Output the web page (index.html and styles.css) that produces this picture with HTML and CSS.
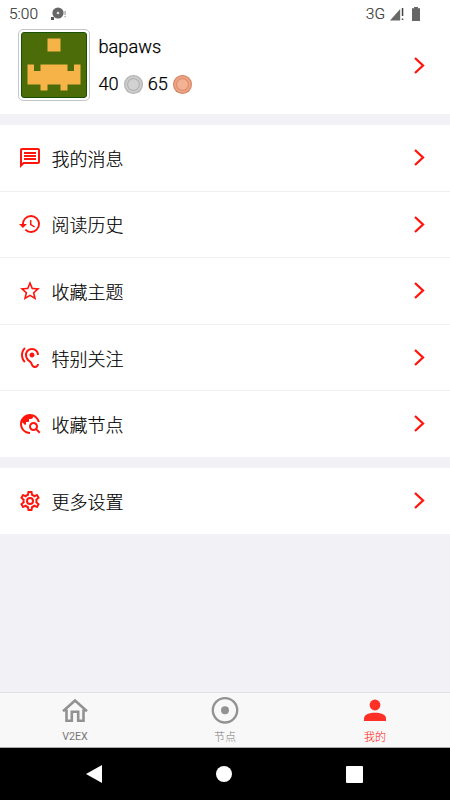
FILE: index.html
```html
<!DOCTYPE html>
<html lang="zh-CN">
<head>
<meta charset="utf-8">
<title>V2EX</title>
<link rel="stylesheet" href="styles.css">
</head>
<body>
<div class="screen">
  <header class="status">
    <span class="time">5:00</span>
    <svg class="notice" width="16" height="14" viewBox="0 0 16 14"><circle cx="7" cy="6" r="5.600" fill="#666"/><path d="M0 10h3v3H0z" fill="#555"/><circle cx="7" cy="6" r="1.300" fill="#ddd"/><path d="M13.400 4h1.400v4h-1.400zm0 5h1.400v1.300h-1.400z" fill="#aaa"/></svg>
    <span class="network">3G</span>
    <svg class="signal" width="14" height="14" viewBox="0 0 14 14"><path d="M0 13.500L10.200 2v11.500z" fill="#686868"/><path d="M11.800 1h1.500v8h-1.500zm0 10.500h1.500V13h-1.500z" fill="#444"/></svg>
    <svg class="battery" width="8" height="14" viewBox="0 0 8 14"><path d="M2 0h4v1.300h2V14H0V1.300h2z" fill="#666"/></svg>
  </header>
  <section class="profile">
    <div class="avatar">
      <svg width="66" height="66" viewBox="0 0 66 66"><rect x=".5" y=".5" width="65" height="65" rx="2.500" fill="#4b6c08" stroke="#185008"/><path fill="#f6b347" d="M26.500 6.500h13v13h-13zM6.500 32.500H13V39h6.500v-6.500h27V39H53v-6.500h6.500v20H46.500v6H39.500v-6h-13v6h-7v-6h-13z"/></svg>
    </div>
    <div class="info">
      <div class="name">bapaws</div>
      <div class="balance"><span>40</span><i class="coin silver"></i><span>65</span><i class="coin bronze"></i></div>
    </div>
    <svg class="chevron" width="12" height="18" viewBox="0 0 12 18"><path d="M2 2L10 9.500l-8 7.500"/></svg>
  </section>
  <nav class="group">
    <a class="row"><svg class="icon" viewBox="0 0 24 24"><path d="M4 4h16v12H5.170L4 17.170V4m0-2c-1.100 0-1.990.9-1.990 2L2 22l4-4h14c1.100 0 2-.9 2-2V4c0-1.100-.9-2-2-2H4zm2 10h12v2H6v-2zm0-3h12v2H6V9zm0-3h12v2H6V6z"/></svg><span>我的消息</span><svg class="chevron" width="12" height="18" viewBox="0 0 12 18"><path d="M2 2L10 9.500l-8 7.500"/></svg></a>
    <a class="row"><svg class="icon" viewBox="0 0 24 24"><path d="M13 3a9 9 0 0 0-9 9H1l3.890 3.890.07.14L9 12H6c0-3.870 3.130-7 7-7s7 3.130 7 7-3.130 7-7 7c-1.930 0-3.680-.79-4.940-2.060l-1.420 1.420A8.954 8.954 0 0 0 13 21a9 9 0 0 0 0-18zm-1 5v5l4.250 2.520.77-1.280-3.520-2.090V8z"/></svg><span>阅读历史</span><svg class="chevron" width="12" height="18" viewBox="0 0 12 18"><path d="M2 2L10 9.500l-8 7.500"/></svg></a>
    <a class="row"><svg class="icon" viewBox="0 0 24 24"><path d="M12 15.390L8.240 17.660L9.230 13.380L5.910 10.500L10.290 10.130L12 6.090L13.710 10.130L18.090 10.500L14.770 13.380L15.760 17.660M22 9.240L14.810 8.630L12 2L9.190 8.630L2 9.240L7.450 13.970L5.820 21L12 17.270L18.180 21L16.540 13.970L22 9.240Z"/></svg><span>收藏主题</span><svg class="chevron" width="12" height="18" viewBox="0 0 12 18"><path d="M2 2L10 9.500l-8 7.500"/></svg></a>
    <a class="row"><svg class="icon" viewBox="0 0 24 24"><path d="M17 20c-.29 0-.56-.06-.76-.15-.71-.37-1.210-.88-1.710-2.380-.51-1.560-1.470-2.290-2.390-3-.79-.61-1.610-1.240-2.320-2.530C9.290 10.980 9 9.930 9 9c0-2.800 2.200-5 5-5s5 2.200 5 5h2c0-3.930-3.070-7-7-7S7 5.070 7 9c0 1.260.38 2.650 1.070 3.900.91 1.650 1.980 2.480 2.850 3.150.81.62 1.390 1.070 1.710 2.050.6 1.820 1.370 2.840 2.730 3.550.51.23 1.070.35 1.640.35 2.210 0 4-1.790 4-4h-2c0 1.100-.9 2-2 2zM7.640 2.640L6.220 1.220C4.230 3.210 3 5.960 3 9s1.230 5.790 3.220 7.780l1.410-1.410C6.010 13.740 5 11.490 5 9s1.010-4.740 2.640-6.360zM11.500 9c0 1.380 1.120 2.500 2.500 2.500s2.500-1.120 2.500-2.500-1.120-2.500-2.500-2.500-2.500 1.120-2.500 2.500z"/></svg><span>特别关注</span><svg class="chevron" width="12" height="18" viewBox="0 0 12 18"><path d="M2 2L10 9.500l-8 7.500"/></svg></a>
    <a class="row"><svg class="icon" viewBox="0 0 24 24"><path d="M19.300 16.900c.4-.7.7-1.500.7-2.400 0-2.500-2-4.500-4.500-4.500S11 12 11 14.500s2 4.500 4.500 4.500c.9 0 1.700-.3 2.400-.7l3.200 3.200 1.400-1.400-3.200-3.200zm-3.800.1c-1.400 0-2.500-1.100-2.500-2.500s1.100-2.500 2.500-2.500 2.500 1.100 2.500 2.500-1.100 2.500-2.500 2.500zM12 20v2C6.480 22 2 17.520 2 12S6.480 2 12 2c4.840 0 8.870 3.440 9.800 8h-2.070c-.64-2.460-2.400-4.470-4.730-5.410V5c0 1.100-.9 2-2 2h-2v2c0 .55-.45 1-1 1H8v2l-.8 1.200-2.990-2.990C4.080 10.790 4 11.380 4 12c0 4.410 3.590 8 8 8z"/></svg><span>收藏节点</span><svg class="chevron" width="12" height="18" viewBox="0 0 12 18"><path d="M2 2L10 9.500l-8 7.500"/></svg></a>
  </nav>
  <nav class="group">
    <a class="row"><svg class="icon" viewBox="0 0 24 24"><path d="M12,8A4,4 0 0,1 16,12A4,4 0 0,1 12,16A4,4 0 0,1 8,12A4,4 0 0,1 12,8M12,10A2,2 0 0,0 10,12A2,2 0 0,0 12,14A2,2 0 0,0 14,12A2,2 0 0,0 12,10M10,22C9.750,22 9.540,21.820 9.500,21.580L9.130,18.930C8.500,18.680 7.960,18.340 7.440,17.940L4.950,18.950C4.730,19.030 4.460,18.950 4.340,18.730L2.340,15.270C2.210,15.050 2.270,14.780 2.460,14.630L4.570,12.970L4.500,12L4.570,11L2.460,9.370C2.270,9.220 2.210,8.950 2.340,8.730L4.340,5.270C4.460,5.050 4.730,4.960 4.950,5.050L7.440,6.050C7.960,5.660 8.500,5.320 9.130,5.070L9.500,2.420C9.540,2.180 9.750,2 10,2H14C14.250,2 14.460,2.180 14.500,2.420L14.870,5.070C15.500,5.320 16.040,5.660 16.560,6.050L19.050,5.050C19.270,4.960 19.540,5.050 19.660,5.270L21.660,8.730C21.790,8.950 21.730,9.220 21.540,9.370L19.430,11L19.500,12L19.430,13L21.540,14.630C21.730,14.780 21.790,15.050 21.660,15.270L19.660,18.730C19.540,18.950 19.270,19.040 19.050,18.950L16.560,17.950C16.040,18.340 15.500,18.680 14.870,18.930L14.500,21.580C14.460,21.820 14.250,22 14,22H10M11.250,4L10.880,6.610C9.680,6.860 8.620,7.500 7.850,8.390L5.440,7.350L4.690,8.650L6.800,10.200C6.400,11.370 6.400,12.640 6.800,13.800L4.680,15.360L5.430,16.660L7.860,15.620C8.630,16.500 9.680,17.140 10.870,17.380L11.240,20H12.760L13.130,17.390C14.320,17.140 15.370,16.500 16.140,15.620L18.570,16.660L19.320,15.360L17.200,13.810C17.600,12.640 17.600,11.370 17.200,10.200L19.310,8.650L18.560,7.350L16.150,8.390C15.380,7.500 14.320,6.860 13.120,6.620L12.750,4H11.250Z"/></svg><span>更多设置</span><svg class="chevron" width="12" height="18" viewBox="0 0 12 18"><path d="M2 2L10 9.500l-8 7.500"/></svg></a>
  </nav>
  <footer class="tabs">
    <a class="tab"><svg width="32" height="32" viewBox="0 0 32 32"><path d="M7.500 15.500V26.800h5.300v-9h6.400v9h5.300V15.500M4 17.300L16 6.500l12 10.800" fill="none" stroke="#929292" stroke-width="2.600"/></svg><span class="latin">V2EX</span></a>
    <a class="tab"><svg width="32" height="32" viewBox="0 0 32 32"><circle cx="16" cy="16.300" r="12.200" fill="none" stroke="#929292" stroke-width="2.300"/><circle cx="16" cy="16.300" r="4" fill="#929292"/></svg><span>节点</span></a>
    <a class="tab active"><svg width="32" height="32" viewBox="0 0 32 32"><circle cx="16" cy="11" r="5.400"/><path d="M5 27v-2.500c0-4 5.500-5.700 11-5.700s11 1.700 11 5.700V27z"/></svg><span>我的</span></a>
  </footer>
  <div class="system">
    <svg width="16" height="18" viewBox="0 0 16 18"><path d="M0 9L16 0v18z"/></svg>
    <svg width="16" height="16" viewBox="0 0 16 16"><circle cx="8" cy="8" r="8"/></svg>
    <svg width="17" height="17" viewBox="0 0 17 17"><rect width="17" height="17" rx="1"/></svg>
  </div>
</div>
</body>
</html>
```
FILE: styles.css
```css
* { box-sizing: border-box; }
body {
  margin: 0;
  font-family: Roboto, "Noto Sans CJK SC", sans-serif;
  color: #000;
}
svg { display: block; flex: none; }
.screen {
  width: 450px;
  height: 800px;
  display: flex;
  flex-direction: column;
  background: #f2f1f6;
  overflow: hidden;
}
.status {
  height: 28px;
  flex: none;
  display: flex;
  align-items: center;
  padding: 0 30px 0 9px;
  background: #fff;
  color: #333;
  font-size: 15.5px;
  font-weight: 300;
  -webkit-text-stroke: .15px #333;
}
.time { width: 42px; }
.network { margin-left: auto; margin-right: 5px; font-size: 15.5px; }
.battery { margin-left: 8px; }
.profile {
  height: 86px;
  flex: none;
  display: flex;
  align-items: flex-start;
  padding: 1.4px 25px 0 17.5px;
  background: #fff;
}
.avatar {
  width: 72px;
  height: 72px;
  padding: 2px;
  border: 1px solid #c5c5cb;
  border-radius: 5px;
}
.info {
  margin-left: 9px;
  padding-top: 6px;
  font-size: 18.2px;
  font-weight: 300;
  line-height: 24px;
  -webkit-text-stroke: .25px #000;
}
.balance {
  display: flex;
  align-items: center;
  gap: 5px;
  margin-top: 13px;
}
.coin {
  width: 19px;
  height: 19px;
  border-radius: 50%;
}
.silver { background: radial-gradient(circle closest-side, #d2d2d2 0 50%, #b0b0b0 62%, #cecece 72% 80%, #a5a5a5 100%); }
.bronze { background: radial-gradient(circle closest-side, #f3b294 0 50%, #dc8c6b 62%, #eda585 72% 80%, #cc7550 100%); }
.chevron {
  margin-left: auto;
  fill: none;
  stroke: #ff150c;
  stroke-width: 2.3;
}
.profile .chevron { margin-top: 26.5px; }
.group {
  margin-top: 11px;
  flex: none;
  background: #fff;
}
.row {
  height: 66.6px;
  display: flex;
  align-items: center;
  padding: 0 25px 1px 18px;
  font-size: 18px;
  font-weight: 300;
  border-bottom: 1px solid #f0f0f3;
}
.row span {
  margin-left: 9.5px;
  padding-top: 1px;
  -webkit-text-stroke: .15px #000;
}
.row:last-child { border-bottom-color: transparent; height: 66px; }
.icon { width: 24px; height: 24px; margin-top: 1px; fill: #ff150c; }
.tabs {
  height: 56px;
  margin-top: auto;
  flex: none;
  display: grid;
  grid-template-columns: repeat(3, 1fr);
  background: #f8f8f8;
  border-top: 1px solid #e2e2e5;
  border-bottom: 1px solid #aaa;
}
.tab {
  display: flex;
  flex-direction: column;
  align-items: center;
  padding-top: 1px;
  color: #777;
  font-size: 11px;
  font-weight: 300;
  line-height: 16px;
}
.tab span { margin-top: 4px; }
.tab .latin { margin-top: 3px; font-size: 10.7px; font-weight: 400; }
.active { color: #ff1008; fill: #ff3127; }
.system {
  height: 52px;
  flex: none;
  display: flex;
  align-items: center;
  justify-content: space-between;
  padding: 0 87px 0 86px;
  background: #000;
  fill: #fff;
}
```
